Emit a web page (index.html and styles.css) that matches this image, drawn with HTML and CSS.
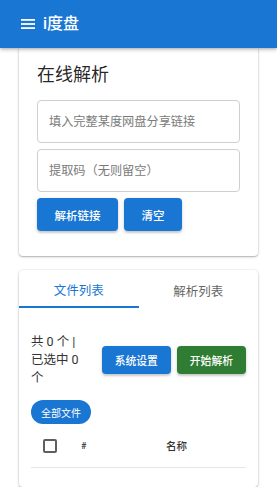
FILE: index.html
```html
<!DOCTYPE html>
<html lang="zh-CN">
<head>
<meta charset="utf-8">
<title>i度盘</title>
<link rel="stylesheet" href="styles.css">
</head>
<body>
<header class="appbar">
  <svg class="menu-icon" width="14" height="10" viewBox="0 0 14 10"><rect x="0" y="0" width="14" height="1.8" fill="#fff"/><rect x="0" y="4.1" width="14" height="1.8" fill="#fff"/><rect x="0" y="8.2" width="14" height="1.8" fill="#fff"/></svg>
  <span class="app-title">i度盘</span>
</header>
<main class="content">
  <section class="card card-parse">
    <h2 class="card-title">在线解析</h2>
    <div class="field"><input class="input" type="text" placeholder="填入完整某度网盘分享链接"></div>
    <div class="field"><input class="input" type="text" placeholder="提取码（无则留空）"></div>
    <div class="actions">
      <button class="btn btn-blue btn-lg">解析链接</button>
      <button class="btn btn-blue btn-lg">清空</button>
    </div>
  </section>
  <section class="card card-list">
    <div class="tabs">
      <div class="tab tab-active">文件列表</div>
      <div class="tab">解析列表</div>
    </div>
    <div class="list-body">
      <div class="stats-row">
        <div class="stats">共 0 个 | 已选中 0 个</div>
        <button class="btn btn-blue btn-sm">系统设置</button>
        <button class="btn btn-green btn-sm">开始解析</button>
      </div>
      <div class="chips"><span class="chip">全部文件</span></div>
      <div class="table-head">
        <div class="cell cell-check"><span class="checkbox"></span></div>
        <div class="cell cell-num">#</div>
        <div class="cell cell-name">名称</div>
      </div>
    </div>
  </section>
</main>
</body>
</html>
```
FILE: styles.css
```css
* { box-sizing: border-box; }
html, body { margin: 0; padding: 0; }
body {
  background: #fff;
  font-family: Roboto, "Noto Sans CJK SC", sans-serif;
  color: rgba(0,0,0,0.87);
}
.appbar {
  position: sticky;
  top: 0;
  z-index: 2;
  height: 48px;
  background: #1976d2;
  display: flex;
  align-items: center;
  padding-left: 21px;
  gap: 8px;
  box-shadow: 0 2px 4px rgba(0,0,0,0.2), 0 1px 2px rgba(0,0,0,0.12);
}
.menu-icon { display: block; }
.app-title {
  color: #fff;
  font-size: 16px;
  font-weight: 500;
  line-height: 20px;
}
.content { padding: 0 19px; }
.card {
  background: #fff;
  border-radius: 4px;
  box-shadow: 0 1px 3px rgba(0,0,0,0.2), 0 1px 1px rgba(0,0,0,0.12), 0 0 0 0.5px rgba(0,0,0,0.06);
}
.card-parse {
  padding: 15px 18px 25px;
  border-top-left-radius: 0;
  border-top-right-radius: 0;
}
.card-title {
  margin: 0 0 13px;
  font-size: 18px;
  font-weight: 400;
  line-height: 24px;
}
.field { margin-bottom: 6px; }
.input {
  display: block;
  width: 100%;
  height: 43px;
  border: 1px solid #cfcfcf;
  border-radius: 4px;
  padding: 0 11px;
  font-family: Roboto, "Noto Sans CJK SC", sans-serif;
  font-size: 12.2px;
  color: #333;
  background: #fff;
  outline: none;
}
.input::placeholder { color: #7a7a7a; }
.actions { display: flex; gap: 6px; }
.btn {
  border: none;
  border-radius: 4px;
  color: #fff;
  font-family: Roboto, "Noto Sans CJK SC", sans-serif;
  font-weight: 500;
  cursor: pointer;
  box-shadow: 0 2px 2px rgba(0,0,0,0.14), 0 1px 4px rgba(0,0,0,0.12);
  white-space: nowrap;
}
.btn-blue { background: #1976d2; }
.btn-green { background: #2e7d32; }
.btn-lg { height: 33px; padding: 0 17.5px; font-size: 11.5px; }
.btn-sm { height: 28px; padding: 0 13px; font-size: 10.8px; flex: 0 0 auto; }
.card-list { margin-top: 14px; padding-bottom: 19px; }
.tabs { display: flex; height: 38px; }
.tab {
  flex: 1;
  display: flex;
  align-items: center;
  justify-content: center;
  font-size: 12.5px;
  color: #666;
  padding-top: 2px;
}
.tab-active {
  color: #1976d2;
  border-bottom: 2px solid #1976d2;
}
.list-body { padding: 0 12px; }
.stats-row {
  display: flex;
  align-items: center;
  gap: 6px;
  margin-top: 25px;
}
.stats {
  width: 52px;
  margin-right: 13px;
  font-size: 12.5px;
  line-height: 18px;
  color: #333;
}
.chips { margin-top: 13px; }
.chip {
  display: inline-flex;
  align-items: center;
  height: 24px;
  padding: 0 10px;
  border-radius: 12px;
  background: #1976d2;
  color: #fff;
  font-size: 10px;
}
.table-head {
  display: grid;
  grid-template-columns: 40px 85px 1fr;
  align-items: center;
  height: 44px;
  border-bottom: 1px solid #e6e6e6;
}
.cell { font-size: 10.5px; font-weight: 500; color: #333; }
.cell-check { padding-left: 12px; display: flex; align-items: center; }
.checkbox {
  display: block;
  width: 14px;
  height: 14px;
  border: 2px solid #5f5f5f;
  border-radius: 2px;
}
.cell-num { padding-left: 10px; font-size: 9px; }
.cell-name { padding-left: 10px; }
```
